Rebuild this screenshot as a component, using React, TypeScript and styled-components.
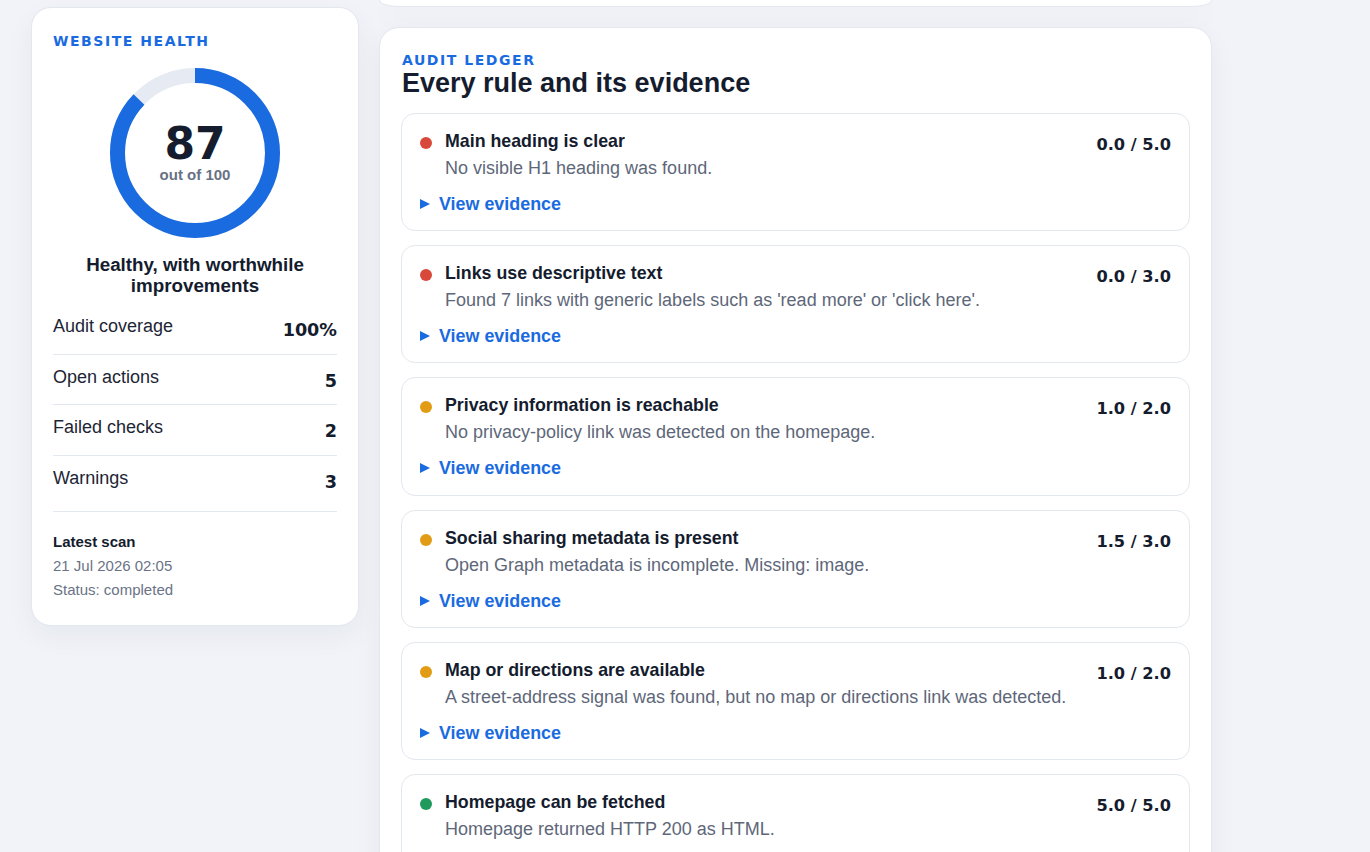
import React from "react";
import styled, { createGlobalStyle } from "styled-components";

const GlobalStyle = createGlobalStyle`
  * { box-sizing: border-box; }
  html, body { margin: 0; padding: 0; }
  body {
    background: #f1f3f8;
    font-family: "Liberation Sans", Arial, sans-serif;
    color: #141c2e;
  }
`;

const DISPLAY = `"DejaVu Sans", "Liberation Sans", sans-serif`;
const BLUE = "#1a6be0";
const INK = "#141c2e";
const MUTED = "#5e6779";
const LINE = "#e3e7ee";

const Page = styled.div`
  display: grid;
  grid-template-columns: 328px 833px;
  column-gap: 20px;
  align-items: start;
  padding: 0 0 40px 31px;
`;

const Panel = styled.section`
  background: #ffffff;
  border: 1px solid ${LINE};
  border-radius: 20px;
  box-shadow: 0 10px 28px rgba(20, 30, 60, 0.05);
`;

/* ---------- health sidebar ---------- */

const Sidebar = styled(Panel)`
  margin-top: 7px;
  padding: 25px 21px 23px;
`;

const Eyebrow = styled.div`
  font-family: ${DISPLAY};
  font-weight: 700;
  font-size: 14px;
  line-height: 16px;
  letter-spacing: 0.11em;
  text-transform: uppercase;
  color: ${BLUE};
`;

const Gauge = styled.div`
  display: grid;
  width: 170px;
  height: 170px;
  margin: 19px auto 16px;
  & > * {
    grid-area: 1 / 1;
  }
`;

const GaugeCenter = styled.div`
  display: flex;
  flex-direction: column;
  align-items: center;
  justify-content: center;
`;

const GaugeValue = styled.div`
  font-family: ${DISPLAY};
  font-weight: 700;
  font-size: 44px;
  line-height: 1;
  color: ${INK};
`;

const GaugeCaption = styled.div`
  font-weight: 700;
  font-size: 15px;
  line-height: 18px;
  color: #687185;
`;

const Verdict = styled.h3`
  margin: 0 0 8px;
  text-align: center;
  font-size: 18.8px;
  line-height: 21px;
  font-weight: 700;
  color: ${INK};
`;

const StatList = styled.div`
  display: flex;
  flex-direction: column;
`;

const StatRow = styled.div`
  display: flex;
  justify-content: space-between;
  align-items: flex-start;
  padding: 10px 0 11.5px;
  border-bottom: 1px solid ${LINE};
  &:last-child {
    border-bottom: none;
  }
`;

const StatLabel = styled.span`
  font-size: 18px;
  line-height: 24px;
  color: #1d2535;
`;

const StatValue = styled.span`
  padding-top: 4px;
  font-family: ${DISPLAY};
  font-weight: 700;
  font-size: 17.6px;
  line-height: 24px;
  color: ${INK};
`;

const ScanBlock = styled.div`
  margin-top: 6px;
  padding-top: 18px;
  border-top: 1px solid ${LINE};
`;

const ScanTitle = styled.div`
  font-size: 15px;
  line-height: 24px;
  font-weight: 700;
  color: ${INK};
`;

const ScanMeta = styled.div`
  font-size: 15px;
  line-height: 24px;
  color: #6a7386;
`;

/* ---------- main column ---------- */

const Main = styled.main`
  display: flex;
  flex-direction: column;
  gap: 20px;
`;

const OverviewTail = styled.div`
  height: 7px;
  background: #ffffff;
  border: 1px solid ${LINE};
  border-top: none;
  border-radius: 0 0 20px 20px / 0 0 7px 7px;
  box-shadow: 0 10px 28px rgba(20, 30, 60, 0.05);
`;

const Ledger = styled(Panel)`
  padding: 24px 21px 22px 22px;
`;

const LedgerTitle = styled.h2`
  margin: 0;
  font-size: 27px;
  line-height: 30px;
  font-weight: 700;
  color: ${INK};
`;

const RuleList = styled.div`
  display: flex;
  flex-direction: column;
  gap: 14px;
  margin: 15px 0 0 -1px;
`;

const RuleCard = styled.article`
  border: 1px solid ${LINE};
  border-radius: 14px;
  padding: 15px 18px 14.2px;
  background: #ffffff;
`;

const RuleHead = styled.div`
  display: grid;
  grid-template-columns: 12px 1fr auto;
  column-gap: 13px;
  align-items: start;
`;

type Tone = "fail" | "warn" | "pass";

const toneColor: Record<Tone, string> = {
  fail: "#d9493b",
  warn: "#e29b14",
  pass: "#1f9a5c",
};

const Dot = styled.span<{ $tone: Tone }>`
  width: 12px;
  height: 12px;
  margin-top: 8px;
  border-radius: 50%;
  background: ${(p) => toneColor[p.$tone]};
`;

const RuleText = styled.div`
  display: flex;
  flex-direction: column;
`;

const RuleName = styled.h4`
  margin: 0;
  font-size: 17.8px;
  line-height: 24px;
  font-weight: 700;
  color: ${INK};
`;

const RuleNote = styled.p`
  margin: 2px 0 0;
  font-size: 18px;
  line-height: 26px;
  color: ${MUTED};
`;

const Score = styled.div`
  margin-top: 4px;
  font-family: ${DISPLAY};
  font-weight: 700;
  font-size: 16.2px;
  line-height: 24px;
  white-space: nowrap;
  color: ${INK};
`;

const Evidence = styled.details`
  margin-top: 11px;
`;

const EvidenceToggle = styled.summary`
  display: flex;
  align-items: center;
  gap: 9px;
  list-style: none;
  cursor: pointer;
  font-size: 17.9px;
  line-height: 24px;
  font-weight: 700;
  color: ${BLUE};
  &::-webkit-details-marker {
    display: none;
  }
`;

const Caret = styled.span`
  width: 0;
  height: 0;
  border-left: 10px solid currentColor;
  border-top: 5.5px solid transparent;
  border-bottom: 5.5px solid transparent;
`;

const EvidenceBody = styled.pre`
  margin: 10px 0 0;
  padding: 12px;
  border-radius: 10px;
  background: #f5f7fb;
  font-family: "Liberation Mono", monospace;
  font-size: 13px;
  color: ${MUTED};
  white-space: pre-wrap;
`;

type Rule = {
  tone: Tone;
  name: string;
  note: string;
  score: string;
  evidence: string;
};

const rules: Rule[] = [
  {
    tone: "fail",
    name: "Main heading is clear",
    note: "No visible H1 heading was found.",
    score: "0.0 / 5.0",
    evidence: "h1_count: 0",
  },
  {
    tone: "fail",
    name: "Links use descriptive text",
    note: "Found 7 links with generic labels such as 'read more' or 'click here'.",
    score: "0.0 / 3.0",
    evidence: "generic_links: 7",
  },
  {
    tone: "warn",
    name: "Privacy information is reachable",
    note: "No privacy-policy link was detected on the homepage.",
    score: "1.0 / 2.0",
    evidence: "privacy_link: none",
  },
  {
    tone: "warn",
    name: "Social sharing metadata is present",
    note: "Open Graph metadata is incomplete. Missing: image.",
    score: "1.5 / 3.0",
    evidence: "og:title ✓  og:description ✓  og:image ✗",
  },
  {
    tone: "warn",
    name: "Map or directions are available",
    note: "A street-address signal was found, but no map or directions link was detected.",
    score: "1.0 / 2.0",
    evidence: "address_signal: true\nmap_link: none",
  },
  {
    tone: "pass",
    name: "Homepage can be fetched",
    note: "Homepage returned HTTP 200 as HTML.",
    score: "5.0 / 5.0",
    evidence: "status: 200\ncontent-type: text/html",
  },
  {
    tone: "pass",
    name: "Page title is set",
    note: "A descriptive page title was found.",
    score: "3.0 / 3.0",
    evidence: "title_length: 42",
  },
];

const stats = [
  { label: "Audit coverage", value: "100%" },
  { label: "Open actions", value: "5" },
  { label: "Failed checks", value: "2" },
  { label: "Warnings", value: "3" },
];

const SCORE = 87;
const RADIUS = 77.5;
const CIRC = 2 * Math.PI * RADIUS;

function HealthGauge({ value }: { value: number }) {
  return (
    <Gauge>
      <svg width="170" height="170" viewBox="0 0 170 170">
        <circle cx="85" cy="85" r={RADIUS} fill="none" stroke="#e6ebf3" strokeWidth="15" />
        <circle
          cx="85"
          cy="85"
          r={RADIUS}
          fill="none"
          stroke={BLUE}
          strokeWidth="15"
          strokeDasharray={`${(CIRC * value) / 100} ${CIRC}`}
          transform="rotate(-90 85 85)"
        />
      </svg>
      <GaugeCenter>
        <GaugeValue>{value}</GaugeValue>
        <GaugeCaption>out of 100</GaugeCaption>
      </GaugeCenter>
    </Gauge>
  );
}

export default function App() {
  return (
    <>
      <GlobalStyle />
      <Page>
        <Sidebar>
          <Eyebrow>Website health</Eyebrow>
          <HealthGauge value={SCORE} />
          <Verdict>Healthy, with worthwhile improvements</Verdict>
          <StatList>
            {stats.map((s) => (
              <StatRow key={s.label}>
                <StatLabel>{s.label}</StatLabel>
                <StatValue>{s.value}</StatValue>
              </StatRow>
            ))}
          </StatList>
          <ScanBlock>
            <ScanTitle>Latest scan</ScanTitle>
            <ScanMeta>21 Jul 2026 02:05</ScanMeta>
            <ScanMeta>Status: completed</ScanMeta>
          </ScanBlock>
        </Sidebar>

        <Main>
          <OverviewTail />
          <Ledger>
            <Eyebrow>Audit ledger</Eyebrow>
            <LedgerTitle>Every rule and its evidence</LedgerTitle>
            <RuleList>
              {rules.map((r) => (
                <RuleCard key={r.name}>
                  <RuleHead>
                    <Dot $tone={r.tone} />
                    <RuleText>
                      <RuleName>{r.name}</RuleName>
                      <RuleNote>{r.note}</RuleNote>
                    </RuleText>
                    <Score>{r.score}</Score>
                  </RuleHead>
                  <Evidence>
                    <EvidenceToggle>
                      <Caret />
                      View evidence
                    </EvidenceToggle>
                    <EvidenceBody>{r.evidence}</EvidenceBody>
                  </Evidence>
                </RuleCard>
              ))}
            </RuleList>
          </Ledger>
        </Main>
      </Page>
    </>
  );
}
